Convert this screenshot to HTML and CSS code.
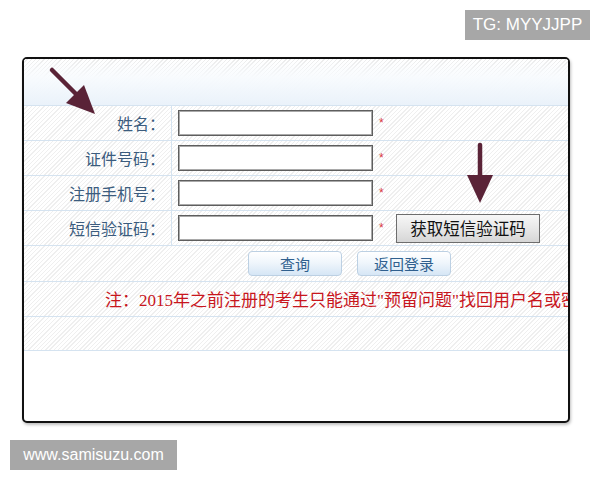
FILE: index.html
```html
<!DOCTYPE html>
<html lang="zh-CN">
<head>
<meta charset="utf-8">
<title>找回用户名或密码</title>
<link rel="stylesheet" href="styles.css">
</head>
<body>
<div class="page">
  <div class="top">
    <div class="badge badge-tg">TG: MYYJJPP</div>
  </div>
  <div class="frame">
    <div class="head"></div>
    <div class="row">
      <div class="label">姓名：</div>
      <div class="field"><span class="input"></span><span class="req">*</span></div>
    </div>
    <div class="row">
      <div class="label">证件号码：</div>
      <div class="field"><span class="input"></span><span class="req">*</span></div>
    </div>
    <div class="row">
      <div class="label">注册手机号：</div>
      <div class="field"><span class="input"></span><span class="req">*</span></div>
    </div>
    <div class="row">
      <div class="label">短信验证码：</div>
      <div class="field"><span class="input"></span><span class="req">*</span><span class="sms-btn">获取短信验证码</span></div>
    </div>
    <div class="row-full row-buttons">
      <span class="btn">查询</span>
      <span class="btn">返回登录</span>
    </div>
    <div class="row-full row-note">注：<span class="num">2015</span>年之前注册的考生只能通过<span class="num">"</span>预留问题<span class="num">"</span>找回用户名或密码。</div>
    <div class="row-full row-empty"></div>
  </div>
  <div class="badge badge-site">www.samisuzu.com</div>
  <svg class="arrows" width="600" height="480" viewBox="0 0 600 480">
    <line x1="52" y1="70" x2="78" y2="96" stroke="#5a2337" stroke-width="4.5" stroke-linecap="round"/>
    <polygon points="95,114 84,85 66,103" fill="#5a2337"/>
    <line x1="480" y1="145" x2="480" y2="178" stroke="#5a2337" stroke-width="4.5" stroke-linecap="round"/>
    <polygon points="467,175 493,175 480,203" fill="#5a2337"/>
  </svg>
</div>
</body>
</html>
```
FILE: styles.css
```css
* { box-sizing: border-box; }
html, body { margin: 0; padding: 0; background: #fff; }
body { font-family: "Noto Sans CJK SC", "Liberation Sans", sans-serif; }

.page {
  position: relative;
  width: 600px;
  height: 480px;
  overflow: hidden;
}

.top {
  display: flex;
  justify-content: flex-end;
  padding: 10px 10px 0 0;
}

.badge {
  background: #a7a7a7;
  color: #fff;
  font-family: "Liberation Sans", Arial, sans-serif;
  height: 30px;
  line-height: 30px;
  text-align: center;
}
.badge-tg { width: 125px; font-size: 17px; }
.badge-site { width: 167px; margin: 17px 0 0 10px; font-size: 16px; }

.frame {
  margin: 17px 0 0 22px;
  width: 548px;
  height: 366px;
  border: 2px solid #111;
  border-radius: 5px;
  box-shadow: 1px 2px 3px rgba(0,0,0,0.25);
  overflow: hidden;
  background: #fff;
}

.head,
.row,
.row-full {
  background-color: #fff;
  background-image: repeating-linear-gradient(135deg, #ffffff 0 2px, #efefef 2px 3px);
}

.head {
  height: 46px;
  background-image:
    linear-gradient(to bottom, rgba(255,255,255,0) 0%, rgba(248,251,254,0.95) 40%, #eaf2fa 100%),
    repeating-linear-gradient(135deg, #ffffff 0 2px, #ebebeb 2px 3px);
}

.row {
  display: grid;
  grid-template-columns: 148px 1fr;
  height: 35px;
  border-top: 1px solid #d5e3f0;
}

.label {
  border-right: 1px solid #d5e3f0;
  text-align: right;
  padding-right: 6px;
  color: #3b5c7e;
  font-size: 16px;
  line-height: 34px;
}

.field {
  display: flex;
  align-items: center;
  padding-left: 6px;
}

.input {
  display: block;
  width: 195px;
  height: 26px;
  background: #fff;
  border: 1px solid #5e5e5e;
  box-shadow: inset 0 0 0 1px #a9a9a9;
}

.req {
  margin-left: 6px;
  width: 10px;
  color: #d9363e;
  font-size: 12px;
  font-family: "Liberation Sans", sans-serif;
  line-height: 1;
}

.sms-btn {
  margin-left: 7px;
  width: 144px;
  height: 29px;
  border: 1px solid #6d6d6d;
  background: linear-gradient(to bottom, #f7f7f7 0%, #e6e6e6 55%, #d6d6d6 100%);
  color: #111;
  font-size: 16.5px;
  line-height: 27px;
  text-align: center;
}

.row-full {
  border-top: 1px solid #d5e3f0;
}

.row-buttons {
  height: 36px;
  display: flex;
  align-items: center;
  gap: 15px;
  padding-left: 224px;
}

.btn {
  width: 94px;
  height: 25px;
  border: 1px solid #bcd0e3;
  border-radius: 4px;
  background: linear-gradient(to bottom, #ffffff 0%, #f0f6fc 45%, #d6e6f5 100%);
  color: #2f5f8e;
  font-size: 15px;
  line-height: 23px;
  text-align: center;
}

.row-note {
  height: 35px;
  padding-left: 81px;
  white-space: nowrap;
  color: #c8161d;
  font-size: 17px;
  line-height: 34px;
  font-family: "Noto Sans CJK SC", "Liberation Serif", serif;
}
.row-note .num { font-family: "Liberation Serif", serif; font-size: 17px; }

.row-empty {
  height: 35px;
  border-bottom: 1px solid #d5e3f0;
}

.arrows {
  position: absolute;
  left: 0;
  top: 0;
  pointer-events: none;
}
```
